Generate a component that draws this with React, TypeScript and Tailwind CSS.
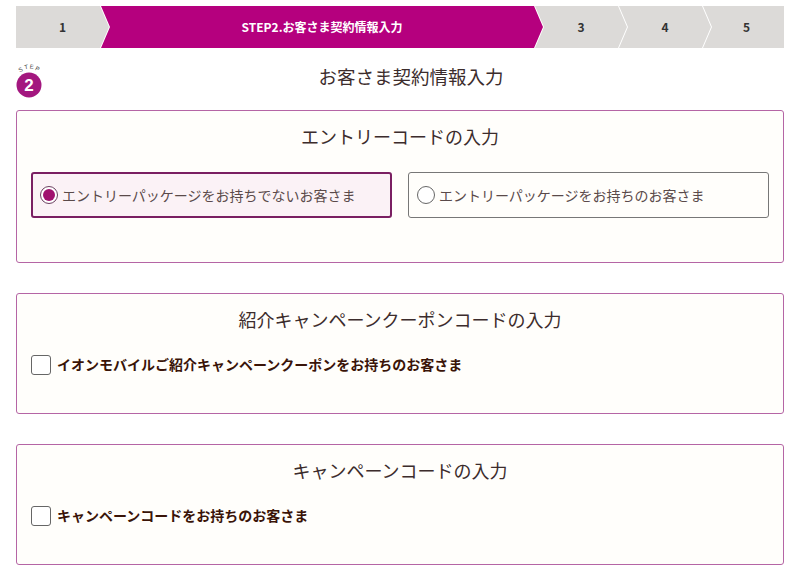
const jp = "font-['Meiryo','Noto_Sans_CJK_JP',sans-serif]";

function StepBar() {
  const chev =
    "[clip-path:polygon(0_0,calc(100%-9px)_0,100%_50%,calc(100%-9px)_100%,0_100%,9px_50%)]";
  const first =
    "[clip-path:polygon(0_0,calc(100%-9px)_0,100%_50%,calc(100%-9px)_100%,0_100%)]";
  const last = "[clip-path:polygon(0_0,100%_0,100%_100%,0_100%,9px_50%)]";
  return (
    <div className="flex h-[42px] text-[12px] font-bold">
      <div className={`w-[93px] shrink-0 bg-[#dcdad8] text-[#333] flex items-center justify-center ${first}`}>
        1
      </div>
      <div className={`flex-1 -ml-[8px] bg-[#b5007e] text-white flex items-center justify-center ${chev}`}>
        STEP2.お客さま契約情報入力
      </div>
      <div className={`w-[92px] shrink-0 -ml-[8px] bg-[#dcdad8] text-[#333] flex items-center justify-center ${chev}`}>
        3
      </div>
      <div className={`w-[92px] shrink-0 -ml-[8px] bg-[#dcdad8] text-[#333] flex items-center justify-center ${chev}`}>
        4
      </div>
      <div className={`w-[81px] shrink-0 -ml-[8px] bg-[#dcdad8] text-[#333] flex items-center justify-center pl-[6px] ${last}`}>
        5
      </div>
    </div>
  );
}

function StepIcon() {
  const letters: [string, number, number, number][] = [
    ["S", 5.5, 9.5, -28],
    ["T", 10.5, 7, -10],
    ["E", 15.5, 6.8, 8],
    ["P", 20.5, 8.6, 26],
  ];
  return (
    <svg width="30" height="36" viewBox="0 0 30 36" className="overflow-visible">
      {letters.map(([ch, x, y, r]) => (
        <text
          key={ch}
          x={x}
          y={y}
          fontSize="6"
          fill="#444"
          textAnchor="middle"
          transform={`rotate(${r} ${x} ${y})`}
          fontFamily="Liberation Sans, sans-serif"
        >
          {ch}
        </text>
      ))}
      <circle cx="13" cy="23" r="12.5" fill="#a3177f" />
      <text
        x="13"
        y="29"
        textAnchor="middle"
        fontSize="17"
        fontWeight="bold"
        fill="#fff"
        fontFamily="Liberation Sans, sans-serif"
      >
        2
      </text>
    </svg>
  );
}

function Panel({ title, children }: { title: string; children: React.ReactNode }) {
  return (
    <div className="border border-[#b565a5] rounded-[3px] bg-[#fffefb] px-[14px] pt-[12px]">
      <h2 className="text-center text-[18px] leading-[26px] text-[#3c2c2c] font-normal">{title}</h2>
      {children}
    </div>
  );
}

function Check({ label }: { label: string }) {
  return (
    <label className="flex items-center gap-[6px] mt-[22px] mb-[38px]">
      <span className="w-[20px] h-[20px] border border-[#666] rounded-[3px] bg-white shrink-0" />
      <span className="text-[14px] font-bold text-[#3a1408]">{label}</span>
    </label>
  );
}

export default function App() {
  return (
    <div className={`w-[800px] h-[573px] bg-white px-4 pt-[6px] overflow-hidden ${jp}`}>
      <StepBar />
      <div className="grid grid-cols-[22px_1fr] h-[62px]">
        <div className="pt-[14px]">
          <StepIcon />
        </div>
        <h1 className="text-center text-[18.5px] leading-[26px] pt-[15px] text-[#3c2c2c] font-normal">
          お客さま契約情報入力
        </h1>
      </div>

      <Panel title="エントリーコードの入力">
        <div className="grid grid-cols-2 gap-[16px] mt-[23px] mb-[44px]">
          <label className="h-[46px] border-2 border-[#7a1f62] rounded-[3px] bg-[#fbf2f6] flex items-center gap-[4px] pl-[7px]">
            <span className="w-[18px] h-[18px] rounded-full border border-[#6b4060] bg-white flex items-center justify-center shrink-0">
              <span className="w-[12px] h-[12px] rounded-full bg-[#a0106e]" />
            </span>
            <span className="text-[14px] text-[#5a4a4a]">エントリーパッケージをお持ちでないお客さま</span>
          </label>
          <label className="h-[46px] border border-[#777] rounded-[3px] bg-[#fffefb] flex items-center gap-[4px] pl-[8px]">
            <span className="w-[18px] h-[18px] rounded-full border border-[#666] bg-white shrink-0" />
            <span className="text-[14px] text-[#5a4a4a]">エントリーパッケージをお持ちのお客さま</span>
          </label>
        </div>
      </Panel>

      <div className="h-[30px]" />
      <Panel title="紹介キャンペーンクーポンコードの入力">
        <Check label="イオンモバイルご紹介キャンペーンクーポンをお持ちのお客さま" />
      </Panel>

      <div className="h-[30px]" />
      <Panel title="キャンペーンコードの入力">
        <Check label="キャンペーンコードをお持ちのお客さま" />
      </Panel>
    </div>
  );
}
